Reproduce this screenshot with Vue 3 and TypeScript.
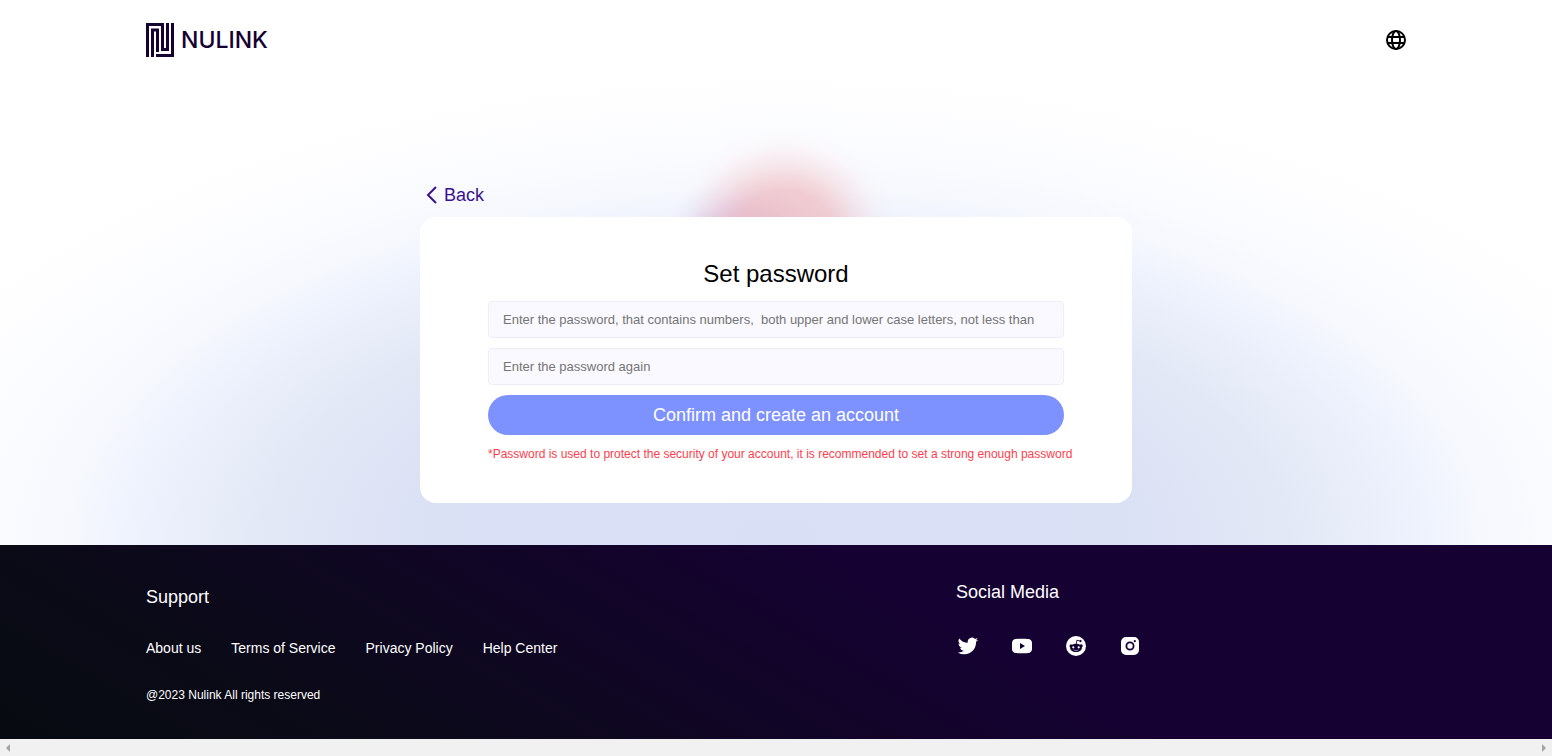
<script setup lang="ts">
import { ref } from 'vue'

const password = ref('')
const confirmation = ref('')
const supportLinks: string[] = ['About us', 'Terms of Service', 'Privacy Policy', 'Help Center']
const socials: { name: string; path: string }[] = [
  {
    name: 'Twitter',
    path: 'M22.16 5.66a8.4 8.4 0 0 1-2.4.66 4.2 4.2 0 0 0 1.84-2.32c-.82.48-1.72.82-2.66 1a4.18 4.18 0 0 0-7.13 3.82A11.87 11.87 0 0 1 3.2 4.46a4.18 4.18 0 0 0 1.29 5.59c-.66-.02-1.31-.2-1.89-.52v.05a4.18 4.18 0 0 0 3.35 4.1 4.2 4.2 0 0 1-1.89.07 4.19 4.19 0 0 0 3.91 2.91A8.4 8.4 0 0 1 1.74 18.4a11.83 11.83 0 0 0 6.41 1.88c7.69 0 11.9-6.38 11.9-11.9 0-.18 0-.36-.02-.54a8.5 8.5 0 0 0 2.13-2.18Z'
  },
  {
    name: 'YouTube',
    path: 'M6 5C8 4.6 16 4.6 18 5c2.600.2 4 1.600 4 4v6c0 2.400-1.400 3.800-4 4-2 .4-10 .4-12 0-2.600-.2-4-1.600-4-4V9c0-2.400 1.400-3.800 4-4Zm4 4v6l5-3-5-3Z'
  },
  {
    name: 'Reddit',
    path: 'M12 2a10 10 0 1 1 0 20 10 10 0 0 1 0-20Zm5.200 8.200c-.5 0-.9.200-1.200.5a8 8 0 0 0-3.400-1l.7-3 2.100.5a1.100 1.100 0 1 0 .2-.8l-2.600-.6c-.2 0-.4.100-.4.300l-.8 3.600a8 8 0 0 0-3.700 1 1.600 1.600 0 1 0-2 2.500c-.3 3 2.500 4.800 5.900 4.800s6.200-1.800 5.900-4.800a1.600 1.600 0 0 0-.7-3ZM9.300 12.200a1.100 1.100 0 1 1 0 2.200 1.100 1.100 0 0 1 0-2.200Zm5.400 0a1.100 1.100 0 1 1 0 2.200 1.100 1.100 0 0 1 0-2.200Zm-5 3.400c1.400.8 3.200.8 4.600 0 .4.5-1 1.200-2.300 1.200s-2.700-.7-2.300-1.200Z'
  },
  {
    name: 'Instagram',
    path: 'M8 3h8a5 5 0 0 1 5 5v8a5 5 0 0 1-5 5H8a5 5 0 0 1-5-5V8a5 5 0 0 1 5-5Zm4 4.500a4.500 4.500 0 1 0 0 9 4.500 4.500 0 0 0 0-9Zm0 1.800a2.700 2.700 0 1 1 0 5.400 2.700 2.700 0 0 1 0-5.400Zm4.800-3.200a1.100 1.100 0 1 0 0 2.200 1.100 1.100 0 0 0 0-2.200Z'
  }
]
</script>

<template>
  <div class="page">
    <div class="hero">
      <header class="header container">
        <a class="brand" href="#" aria-label="NULINK">
          <svg class="mark" viewBox="0 0 28 34" aria-hidden="true">
            <path d="M1.500 34V1.500H16.500V26.500H21.500V0M6.500 34V7H11.500V29M10 32.500H26.500V0" />
          </svg>
          <span class="wordmark">NULINK</span>
        </a>
        <button class="language" type="button" aria-label="Language">
          <svg viewBox="0 0 24 24" aria-hidden="true">
            <circle cx="12" cy="12" r="9" />
            <ellipse cx="12" cy="12" rx="4" ry="9" />
            <path d="M4 9h16M4 15h16" />
          </svg>
        </button>
      </header>

      <main class="main">
        <a class="back" href="#">
          <svg viewBox="0 0 12 18" aria-hidden="true"><path d="M10 1 2 9l8 8" /></svg>
          Back
        </a>
        <form class="card" @submit.prevent>
          <h1>Set password</h1>
          <input
            v-model="password"
            type="password"
            aria-label="Password"
            placeholder="Enter the password, that contains numbers,&nbsp; both upper and lower case letters, not less than"
          />
          <input
            v-model="confirmation"
            type="password"
            aria-label="Repeat password"
            placeholder="Enter the password again"
          />
          <button class="submit" type="submit">Confirm and create an account</button>
          <p class="hint">*Password is used to protect the security of your account, it is recommended to set a strong enough password</p>
        </form>
      </main>
    </div>

    <footer class="footer">
      <div class="container columns">
        <section class="support">
          <h2>Support</h2>
          <nav class="links">
            <a v-for="link in supportLinks" :key="link" href="#">{{ link }}</a>
          </nav>
          <p class="copyright">@2023 Nulink All rights reserved</p>
        </section>
        <section class="social">
          <h2>Social Media</h2>
          <div class="icons">
            <a v-for="item in socials" :key="item.name" href="#" :aria-label="item.name">
              <svg viewBox="0 0 24 24" aria-hidden="true"><path fill-rule="evenodd" :d="item.path" /></svg>
            </a>
          </div>
        </section>
      </div>
    </footer>

    <div class="scrollbar" aria-hidden="true">
      <svg viewBox="0 0 16 17"><path d="M10 5v8L6 9Z" /></svg>
      <svg viewBox="0 0 16 17"><path d="M6 5v8l4-4Z" /></svg>
    </div>
  </div>
</template>

<style>
body {
  margin: 0;
}
</style>

<style scoped>
.page {
  min-height: 100vh;
  display: flex;
  flex-direction: column;
  font-family: "Liberation Sans", Arial, sans-serif;
  color: #000;
}
.page *,
.page *::before {
  box-sizing: border-box;
}
a {
  color: inherit;
  text-decoration: none;
}
h1,
h2,
p {
  margin: 0;
  font-weight: 400;
}
.container {
  width: calc(100% - 292px);
  margin: 0 auto;
}
.hero {
  flex: 1;
  padding-bottom: 42px;
  background:
    radial-gradient(circle at calc(50% + 8px) 242px, rgba(236, 175, 180, 0.7) 0, rgba(238, 178, 184, 0.62) 52px, rgba(242, 190, 195, 0.3) 78px, rgba(245, 205, 210, 0.08) 98px, transparent 114px),
    radial-gradient(circle at calc(50% - 38px) 256px, rgba(175, 140, 215, 0.45) 0, rgba(175, 140, 215, 0.32) 38px, rgba(185, 160, 225, 0.1) 62px, transparent 80px),
    radial-gradient(ellipse 760px 380px at 50% 540px, #d9dff5 0, #dbe1f5 46%, #e2e8f5 67%, #edf2fd 84%, rgba(246, 248, 253, 0.8) 93%, rgba(250, 251, 255, 0) 100%),
    radial-gradient(ellipse 960px 480px at 50% 545px, #f3f5fc 0, #f5f7fd 68%, #fbfcff 85%, #fff 100%);
}
.header {
  height: 80px;
  display: flex;
  align-items: center;
  justify-content: space-between;
}
.brand {
  display: flex;
  align-items: center;
  gap: 7px;
  color: #150132;
}
.mark {
  width: 28px;
  height: 34px;
  fill: none;
  stroke: currentColor;
  stroke-width: 3;
}
.wordmark {
  font: 500 23px/32px Inter, sans-serif;
}
.language {
  width: 24px;
  height: 24px;
  padding: 0;
  margin-right: -2px;
  border: 0;
  background: none;
}
.language svg {
  display: block;
  fill: none;
  stroke: #000;
  stroke-width: 2;
}
.main {
  width: 712px;
  max-width: 100%;
  margin: 0 auto;
  padding-top: 101px;
}
.back {
  display: flex;
  align-items: center;
  gap: 6px;
  width: max-content;
  margin: 0 0 8px 6px;
  font-size: 18px;
  line-height: 28px;
  color: #3a128f;
}
.back svg {
  width: 12px;
  height: 18px;
  fill: none;
  stroke: currentColor;
  stroke-width: 2;
}
.card {
  display: flex;
  flex-direction: column;
  gap: 10px;
  padding: 40px 68px;
  border-radius: 16px;
  background: #fff;
}
h1 {
  font-size: 24px;
  line-height: 34px;
  text-align: center;
}
.card input {
  width: 100%;
  height: 37px;
  padding: 0 14px;
  border: 1px solid #efecfc;
  border-radius: 4px;
  background: #faf9ff;
  font: 13px "Liberation Sans", Arial, sans-serif;
}
.card input::placeholder {
  color: #757575;
}
.submit {
  height: 40px;
  border: 0;
  border-radius: 20px;
  background: #7d91ff;
  color: #fff;
  font: 18px "Liberation Sans", Arial, sans-serif;
}
.hint {
  font-size: 12px;
  line-height: 18px;
  color: #ff3d4d;
  white-space: nowrap;
}
.footer {
  height: 194px;
  background: linear-gradient(30deg, #060b10 0%, #0b0a18 20%, #150132 62%);
  color: #fff;
}
.columns {
  display: grid;
  grid-template-columns: 810fr 450fr;
}
.support {
  padding-top: 40px;
}
.social {
  padding-top: 35px;
}
h2 {
  font-size: 18px;
  line-height: 24px;
}
.links {
  display: flex;
  gap: 30px;
  margin-top: 29px;
  font-size: 14px;
  line-height: 20px;
}
.copyright {
  margin-top: 28px;
  font-size: 12px;
  line-height: 18px;
}
.icons {
  display: flex;
  gap: 30px;
  margin-top: 30px;
}
.icons svg {
  display: block;
  width: 24px;
  height: 24px;
  fill: currentColor;
}
.scrollbar {
  height: 17px;
  display: flex;
  justify-content: space-between;
  background: #f1f1f1;
}
.scrollbar svg {
  width: 16px;
  height: 17px;
  fill: #a3a3a3;
}
</style>
